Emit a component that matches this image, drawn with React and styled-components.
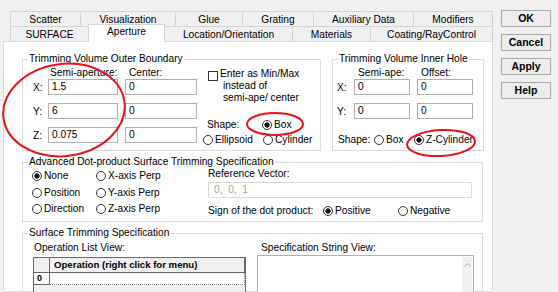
import React from "react";
import styled, { createGlobalStyle } from "styled-components";

const GlobalStyle = createGlobalStyle`
  html, body {
    margin: 0;
    padding: 0;
    background: #f0f0f0;
  }
  body {
    font-family: "Liberation Sans", Arial, sans-serif;
    font-size: 10.2px;
    color: #000;
  }
  * { box-sizing: border-box; }
`;

const Window = styled.div`
  position: relative;
  width: 558px;
  height: 292px;
  overflow: hidden;
  display: flex;
  align-items: flex-start;
  background: #f0f0f0;
`;

// TABS
const TabArea = styled.div`
  margin-left: 3px;
  width: 490px;
  height: 100%;
  padding-top: 11px;
  display: flex;
  flex-direction: column;
`;

const TabRow = styled.div`
  display: flex;
  height: 15px;
  padding-left: 8px;
`;

const Tab = styled.div`
  position: relative;
  z-index: ${(p) => (p.$active ? 2 : 0)};
  width: ${(p) => p.$w + 1}px;
  height: ${(p) => (p.$active ? 18 : 15)}px;
  margin-top: ${(p) => (p.$active ? -2 : 0)}px;
  margin-left: -1px;
  border: 1px solid #d4d4d4;
  border-bottom: none;
  background: ${(p) => (p.$active ? "#fff" : "#f0f0f0")};
  display: flex;
  align-items: ${(p) => (p.$active ? "flex-start" : "center")};
  justify-content: center;
  line-height: 13px;
  white-space: nowrap;
`;

const Panel = styled.div`
  flex: 1;
  background: #fff;
  border: 1px solid #d9d9d9;
  padding: 10px 9px 0 18px;
  display: flex;
  flex-direction: column;
  gap: 4px;
  min-height: 0;
`;

// GROUP BOXES
const GroupRow = styled.div`
  display: flex;
  gap: 11px;
`;

const GroupBox = styled.fieldset`
  margin: 0;
  padding: 0;
  min-width: 0;
  width: ${(p) => p.$w}px;
  height: ${(p) => (p.$h ? p.$h + "px" : "auto")};
  flex: ${(p) => (p.$grow ? 1 : "none")};
  border: 1px solid #dcdcdc;
`;

const Legend = styled.legend`
  margin-left: 5px;
  padding: 0 1px;
  height: 14px;
  line-height: 14px;
`;

const BoxBody = styled.div`
  display: flex;
  padding-left: ${(p) => p.$pl}px;
`;

const Fields = styled.div`
  display: flex;
  flex-direction: column;
`;

const HeadRow = styled.div`
  display: grid;
  grid-template-columns: ${(p) => p.$cols};
  height: 13px;
  line-height: 13px;
  white-space: nowrap;
  span { padding-left: 4px; }
`;

const FieldGrid = styled.div`
  display: grid;
  grid-template-columns: ${(p) => p.$cols};
  row-gap: 8px;
  align-items: center;
`;

const Input = styled.div`
  width: ${(p) => p.$w}px;
  height: 16px;
  border: 1px solid ${(p) => (p.$disabled ? "#d9d9d9" : "#b0b0b0")};
  background: #fff;
  color: ${(p) => (p.$disabled ? "#a0a0a0" : "#000")};
  padding-left: ${(p) => (p.$disabled ? 5 : 3)}px;
  line-height: 14px;
  white-space: pre;
`;

const Options = styled.div`
  display: flex;
  flex-direction: column;
  margin-left: 6px;
`;

const CheckRow = styled.div`
  display: flex;
  align-items: flex-start;
  margin-left: 5px;
  padding-top: 2px;
  line-height: 12px;
`;

const CheckBox = styled.span`
  flex: none;
  width: 10px;
  height: 10px;
  margin-top: 3px;
  margin-right: 2px;
  border: 1px solid #333;
  background: #fff;
`;

const CheckText = styled.div`
  span { display: block; }
  span + span { padding-left: 3px; }
`;

const Line = styled.div`
  display: flex;
  align-items: center;
  height: 14px;
  line-height: 14px;
  margin-top: ${(p) => p.$mt || 0}px;
  margin-left: ${(p) => p.$ml || 0}px;
  white-space: nowrap;
`;

const Label = styled.span`
  flex: none;
  width: ${(p) => (p.$w ? p.$w + "px" : "auto")};
  padding-left: ${(p) => p.$pl || 0}px;
`;

const RadioItem = styled.span`
  display: inline-flex;
  align-items: center;
  gap: 2px;
  flex: none;
  width: ${(p) => (p.$w ? p.$w + "px" : "auto")};
  white-space: nowrap;
`;

const RadioDot = styled.span`
  width: 10px;
  height: 10px;
  border-radius: 50%;
  border: 1px solid #333;
  background: ${(p) =>
    p.$on ? "radial-gradient(circle, #111 0 2.3px, #fff 3px)" : "#fff"};
`;

const Radio = ({ on, w, children }) => (
  <RadioItem $w={w}>
    <RadioDot $on={on} />
    {children}
  </RadioItem>
);

// ADVANCED
const RadioGrid = styled.div`
  display: grid;
  grid-template-columns: 64px 112px;
  grid-auto-rows: 14px;
  row-gap: 2.5px;
  padding-left: 9px;
  line-height: 14px;
`;

const RefPart = styled.div`
  flex: 1;
  display: flex;
  flex-direction: column;
  padding-right: 9px;
  margin-top: -2px;
`;

// SURFACE TRIMMING
const ListCol = styled.div`
  width: ${(p) => p.$w}px;
  margin-left: ${(p) => p.$ml || 0}px;
  display: flex;
  flex-direction: column;
`;

const ViewLabel = styled.div`
  height: 14px;
  line-height: 14px;
  margin-top: 1px;
  padding-left: ${(p) => p.$pl}px;
`;

const OpTable = styled.div`
  margin-top: 2px;
  height: 60px;
  border: 1px solid #6a6a6a;
  background: #f0f0f0;
  display: grid;
  grid-template-columns: 16px 1fr;
  grid-template-rows: 15px 12px;
  align-content: start;
`;

const Cell = styled.div`
  background: ${(p) => (p.$head ? "#f0f0f0" : "#fff")};
  border-right: 1px ${(p) => (p.$dotted ? "dotted #8a8a8a" : "solid #6a6a6a")};
  border-bottom: 1px ${(p) => (p.$dotted ? "dotted #8a8a8a" : "solid #6a6a6a")};
  font-weight: bold;
  font-size: ${(p) => (p.$head ? 9.6 : 9)}px;
  line-height: ${(p) => (p.$head ? 14 : 11)}px;
  padding-left: ${(p) => (p.$head ? 4 : 3)}px;
  white-space: nowrap;
`;

const TextArea = styled.div`
  height: 60px;
  border: 1px solid #b0b0b0;
  background: #fff;
  display: flex;
  justify-content: flex-end;
  padding: 1px;
`;

const ScrollTrack = styled.div`
  width: 10px;
  background: #f0f0f0;
  display: flex;
  justify-content: center;
  padding-top: 6px;
`;

// BUTTONS
const ButtonCol = styled.div`
  margin-left: 8px;
  padding-top: 10px;
  display: flex;
  flex-direction: column;
  gap: 7px;
`;

const Button = styled.div`
  width: 50px;
  height: 17px;
  border: 1px solid #a9a9a9;
  background: #ededed;
  font-weight: bold;
  font-size: 10.5px;
  line-height: 15px;
  text-align: center;
`;

const Marks = styled.svg`
  position: absolute;
  inset: 0;
  pointer-events: none;
`;

const backTabs = [
  ["Scatter", 70],
  ["Visualization", 95],
  ["Glue", 67],
  ["Grating", 71],
  ["Auxiliary Data", 100],
  ["Modifiers", 79],
];

const frontTabs = [
  ["SURFACE", 78],
  ["Aperture", 76, true],
  ["Location/Orientation", 128],
  ["Materials", 78],
  ["Coating/RayControl", 122],
];

export default function App() {
  const outerCols = "15px 77px 72px";
  const innerCols = "17px 63px 56px";
  return (
    <Window>
      <GlobalStyle />
      <TabArea>
        <TabRow>
          {backTabs.map(([t, w]) => (
            <Tab key={t} $w={w}>{t}</Tab>
          ))}
        </TabRow>
        <TabRow>
          {frontTabs.map(([t, w, a]) => (
            <Tab key={t} $w={w} $active={a}>{t}</Tab>
          ))}
        </TabRow>
        <Panel>
          <GroupRow>
            <GroupBox $w={299} $h={99}>
              <Legend>Trimming Volume Outer Boundary</Legend>
              <BoxBody $pl={10}>
                <Fields>
                  <HeadRow $cols={outerCols}>
                    <i />
                    <span style={{ paddingLeft: 2 }}>Semi-aperture:</span>
                    <span>Center:</span>
                  </HeadRow>
                  <FieldGrid $cols={outerCols}>
                    <Label>X:</Label><Input $w={70}>1.5</Input><Input $w={72}>0</Input>
                    <Label>Y:</Label><Input $w={70}>6</Input><Input $w={72}>0</Input>
                    <Label>Z:</Label><Input $w={70}>0.075</Input><Input $w={72}>0</Input>
                  </FieldGrid>
                </Fields>
                <Options>
                  <CheckRow>
                    <CheckBox />
                    <CheckText>
                      <span>Enter as Min/Max</span>
                      <span>instead of</span>
                      <span>semi-ape/ center</span>
                    </CheckText>
                  </CheckRow>
                  <Line $mt={14} $ml={4}>
                    <Label $w={55}>Shape:</Label>
                    <Radio on>Box</Radio>
                  </Line>
                  <Line $mt={1}>
                    <Radio w={60}>Ellipsoid</Radio>
                    <Radio>Cylinder</Radio>
                  </Line>
                </Options>
              </BoxBody>
            </GroupBox>
            <GroupBox $w={152} $h={99}>
              <Legend>Trimming Volume Inner Hole</Legend>
              <BoxBody $pl={4}>
                <Fields>
                  <HeadRow $cols={innerCols}>
                    <i />
                    <span>Semi-ape:</span>
                    <span>Offset:</span>
                  </HeadRow>
                  <FieldGrid $cols={innerCols}>
                    <Label>X:</Label><Input $w={56}>0</Input><Input $w={56}>0</Input>
                    <Label>Y:</Label><Input $w={56}>0</Input><Input $w={56}>0</Input>
                  </FieldGrid>
                  <Line $mt={14} $ml={1}>
                    <Label $w={36}>Shape:</Label>
                    <Radio w={40}>Box</Radio>
                    <Radio on>Z-Cylinder</Radio>
                  </Line>
                </Fields>
              </BoxBody>
            </GroupBox>
          </GroupRow>

          <GroupBox $w={461} $h={67}>
            <Legend>Advanced Dot-product Surface Trimming Specification</Legend>
            <BoxBody $pl={0}>
              <RadioGrid>
                <Radio on>None</Radio>
                <Radio>X-axis Perp</Radio>
                <Radio>Position</Radio>
                <Radio>Y-axis Perp</Radio>
                <Radio>Direction</Radio>
                <Radio>Z-axis Perp</Radio>
              </RadioGrid>
              <RefPart>
                <Line>Reference Vector:</Line>
                <Input $w={264} $disabled style={{ marginTop: 1 }}>0,  0,  1</Input>
                <Line $mt={6}>
                  <Label $w={115}>Sign of the dot product:</Label>
                  <Radio on w={75}>Positive</Radio>
                  <Radio>Negative</Radio>
                </Line>
              </RefPart>
            </BoxBody>
          </GroupBox>

          <GroupBox $w={461} $grow>
            <Legend>Surface Trimming Specification</Legend>
            <BoxBody $pl={10}>
              <ListCol $w={213}>
                <ViewLabel $pl={1}>Operation List View:</ViewLabel>
                <OpTable>
                  <Cell $head />
                  <Cell $head>Operation (right click for menu)</Cell>
                  <Cell>0</Cell>
                  <Cell $dotted />
                </OpTable>
              </ListCol>
              <ListCol $w={217} $ml={11}>
                <ViewLabel $pl={4}>Specification String View:</ViewLabel>
                <TextArea>
                  <ScrollTrack>
                    <svg width="7" height="4" viewBox="0 0 7 4">
                      <path d="M0.5 3.5 L3.5 0.5 L6.5 3.5" fill="none" stroke="#a6a6a6" strokeWidth="1" />
                    </svg>
                  </ScrollTrack>
                </TextArea>
              </ListCol>
            </BoxBody>
          </GroupBox>
        </Panel>
      </TabArea>

      <ButtonCol>
        <Button>OK</Button>
        <Button>Cancel</Button>
        <Button>Apply</Button>
        <Button>Help</Button>
      </ButtonCol>

      <Marks width="558" height="292" viewBox="0 0 558 292">
        <g fill="none" stroke="#e3141b" strokeWidth="2">
          <ellipse cx="64" cy="110" rx="61" ry="46" transform="rotate(-8 64 110)" />
          <ellipse cx="275" cy="124" rx="28" ry="11" />
          <ellipse cx="441" cy="143" rx="34" ry="13" transform="rotate(-3 441 143)" />
        </g>
      </Marks>
    </Window>
  );
}
